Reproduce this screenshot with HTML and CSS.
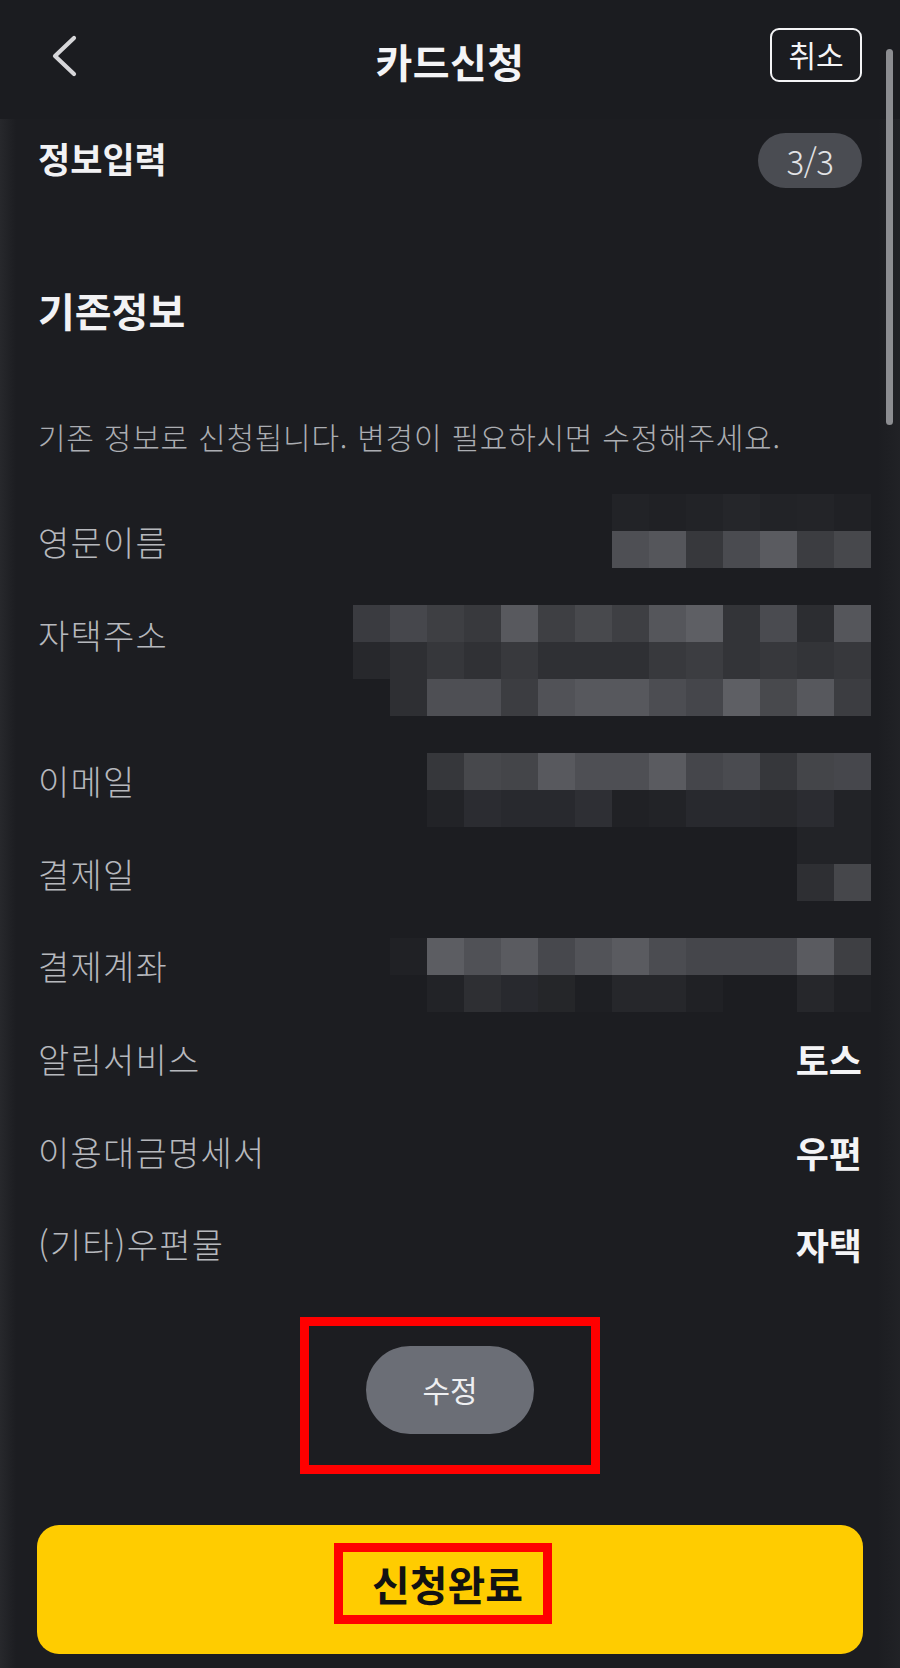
FILE: index.html
```html
<!DOCTYPE html>
<html lang="ko">
<head>
<meta charset="utf-8">
<title>카드신청</title>
<link rel="stylesheet" href="styles.css">
</head>
<body>
<div class="app">
  <header class="topbar">
    <button class="back" aria-label="뒤로">
      <svg width="30" height="44" viewBox="0 0 30 44"><path d="M22 4 L3 22 L22 40" fill="none" stroke="#d6d6d9" stroke-width="4.2" stroke-linecap="round" stroke-linejoin="round"/></svg>
    </button>
    <h1 class="title">카드신청</h1>
    <button class="cancel">취소</button>
  </header>

  <main class="content">
    <div class="step">
      <div class="step-title">정보입력</div>
      <div class="step-pill">3/3</div>
    </div>

    <h2 class="section-title">기존정보</h2>
    <p class="desc">기존 정보로 신청됩니다. 변경이 필요하시면 수정해주세요.</p>

    <div class="data">
      <div class="row r-name">
        <div class="label">영문이름</div>
        <div class="mosaic">
          <div class="mrow"><i style="background:#222327"></i><i style="background:#202125"></i><i style="background:#222327"></i><i style="background:#25262a"></i><i style="background:#222327"></i><i style="background:#232428"></i><i style="background:#202125"></i></div>
          <div class="mrow"><i style="background:#4e4f54"></i><i style="background:#55565b"></i><i style="background:#37383c"></i><i style="background:#4a4b50"></i><i style="background:#5a5b60"></i><i style="background:#3c3d41"></i><i style="background:#47484c"></i></div>
        </div>
      </div>

      <div class="row r-addr">
        <div class="label">자택주소</div>
        <div class="mosaic">
          <div class="mrow"><i style="background:#3a3b40"></i><i style="background:#46474c"></i><i style="background:#3e3f43"></i><i style="background:#38393d"></i><i style="background:#58595e"></i><i style="background:#3e3f43"></i><i style="background:#48494d"></i><i style="background:#3e3f43"></i><i style="background:#55565b"></i><i style="background:#5e5f64"></i><i style="background:#333438"></i><i style="background:#4a4b50"></i><i style="background:#2c2d31"></i><i style="background:#55565b"></i></div>
          <div class="mrow"><i style="background:#27282c"></i><i style="background:#2e2f33"></i><i style="background:#36373b"></i><i style="background:#303135"></i><i style="background:#38393d"></i><i style="background:#2f3034"></i><i style="background:#2f3034"></i><i style="background:#2f3034"></i><i style="background:#38393d"></i><i style="background:#3c3d41"></i><i style="background:#333438"></i><i style="background:#37383c"></i><i style="background:#333438"></i><i style="background:#37383c"></i></div>
          <div class="mrow"><i style="background:#2e2f33"></i><i style="background:#4e4f54"></i><i style="background:#4e4f54"></i><i style="background:#3c3d41"></i><i style="background:#515257"></i><i style="background:#57585d"></i><i style="background:#57585d"></i><i style="background:#4c4d52"></i><i style="background:#45464b"></i><i style="background:#5e5f64"></i><i style="background:#48494d"></i><i style="background:#57585d"></i><i style="background:#3c3d41"></i></div>
        </div>
      </div>

      <div class="row r-mail">
        <div class="label">이메일</div>
        <div class="mosaic">
          <div class="mrow"><i style="background:#36373b"></i><i style="background:#47484c"></i><i style="background:#444549"></i><i style="background:#58595e"></i><i style="background:#4e4f54"></i><i style="background:#4e4f54"></i><i style="background:#5a5b60"></i><i style="background:#45464b"></i><i style="background:#4a4b50"></i><i style="background:#36373b"></i><i style="background:#444549"></i><i style="background:#46474c"></i></div>
          <div class="mrow"><i style="background:#222327"></i><i style="background:#2b2c31"></i><i style="background:#28292e"></i><i style="background:#28292e"></i><i style="background:#2e2f34"></i><i style="background:#202125"></i><i style="background:#222327"></i><i style="background:#28292e"></i><i style="background:#28292e"></i><i style="background:#27282c"></i><i style="background:#2b2c31"></i><i style="background:#222327"></i></div>
        </div>
      </div>

      <div class="row r-day">
        <div class="label">결제일</div>
        <div class="mosaic">
          <div class="mrow"><i style="background:#222327"></i><i style="background:#222327"></i></div>
          <div class="mrow"><i style="background:#2e2f33"></i><i style="background:#46474b"></i></div>
        </div>
      </div>

      <div class="row r-acct">
        <div class="label">결제계좌</div>
        <div class="mosaic">
          <div class="mrow"><i style="background:#202125"></i><i style="background:#5c5d62"></i><i style="background:#505156"></i><i style="background:#5a5b60"></i><i style="background:#47484d"></i><i style="background:#525358"></i><i style="background:#5a5b60"></i><i style="background:#4b4c51"></i><i style="background:#45464b"></i><i style="background:#45464b"></i><i style="background:#45464b"></i><i style="background:#5a5b60"></i><i style="background:#3e3f43"></i></div>
          <div class="mrow"><i style="background:#1c1d21"></i><i style="background:#222327"></i><i style="background:#2e2f33"></i><i style="background:#28292e"></i><i style="background:#252629"></i><i style="background:#1e1f23"></i><i style="background:#26272b"></i><i style="background:#26272b"></i><i style="background:#202125"></i><i style="background:#1c1d21"></i><i style="background:#1c1d21"></i><i style="background:#26272b"></i><i style="background:#1f2024"></i></div>
        </div>
      </div>

      <div class="row text first">
        <div class="label">알림서비스</div>
        <div class="value">토스</div>
      </div>
      <div class="row text">
        <div class="label">이용대금명세서</div>
        <div class="value">우편</div>
      </div>
      <div class="row text">
        <div class="label">(기타)우편물</div>
        <div class="value">자택</div>
      </div>
    </div>

    <div class="edit-mark">
      <button class="edit-btn">수정</button>
    </div>

    <button class="submit">
      <span class="submit-mark">신청완료</span>
    </button>
  </main>

  <div class="scrollbar"></div>
</div>
</body>
</html>
```

FILE: styles.css
```css
* { box-sizing: border-box; }

html, body {
  margin: 0;
  padding: 0;
  background: #1c1d21;
}

body {
  font-family: "Noto Sans CJK KR", "Noto Sans", sans-serif;
  color: #f2f2f4;
}

.app {
  position: relative;
  width: 900px;
  height: 1668px;
  overflow: hidden;
  background: #1c1d21;
}

button {
  font-family: inherit;
  background: none;
  border: 0;
  padding: 0;
  cursor: pointer;
}

/* Header */
.topbar {
  height: 119px;
  display: flex;
  align-items: center;
  justify-content: space-between;
  padding: 0 38px 0 52px;
  background: #1b1c20;
  position: relative;
}

.back {
  width: 30px;
  height: 44px;
  margin-top: -8px;
  display: flex;
}

.title {
  position: absolute;
  left: 0;
  right: 0;
  top: 36px;
  margin: 0;
  text-align: center;
  font-size: 40px;
  line-height: 50px;
  font-weight: 700;
  letter-spacing: 0.5px;
  color: #f4f4f6;
  pointer-events: none;
}

.cancel {
  width: 92px;
  height: 54px;
  margin-top: -9px;
  border: 2px solid #f4f4f6;
  border-radius: 9px;
  color: #f4f4f6;
  font-size: 30px;
  font-weight: 400;
  line-height: 1;
  display: flex;
  align-items: center;
  justify-content: center;
  padding-bottom: 3px;
}

/* Content */
.content {
  padding: 0 38px;
  background: linear-gradient(to right, #27282c 0, #1c1d21 16px, #1c1d21 calc(100% - 22px), #212226 100%);
  height: 1549px;
}

.step {
  padding-top: 14px;
  display: flex;
  justify-content: space-between;
  align-items: center;
}

.step-title {
  font-size: 35px;
  line-height: 40px;
  font-weight: 700;
  margin-top: -5px;
  color: #f2f2f4;
}

.step-pill {
  width: 104px;
  height: 55px;
  border-radius: 28px;
  background: #4a4c52;
  color: #e2e3e6;
  font-size: 33px;
  font-weight: 300;
  display: flex;
  align-items: center;
  justify-content: center;
  letter-spacing: -0.5px;
}

.section-title {
  margin: 98px 0 0;
  font-size: 40px;
  line-height: 48px;
  font-weight: 700;
  color: #f2f2f4;
}

.desc {
  margin: 82px 0 0;
  font-size: 30px;
  line-height: 40px;
  font-weight: 300;
  letter-spacing: 0.75px;
  color: #abadb2;
  white-space: nowrap;
}

/* Data rows */
.data {
  margin-top: 38px;
}

.row {
  display: flex;
  justify-content: space-between;
  align-items: flex-start;
}

.label {
  font-size: 34px;
  line-height: 40px;
  font-weight: 300;
  letter-spacing: 1.2px;
  color: #b6b8bd;
  white-space: nowrap;
}

.mosaic {
  margin-right: -9px;
  display: flex;
  flex-direction: column;
}

.mrow {
  display: flex;
  justify-content: flex-end;
}

.mrow i {
  display: block;
  width: 37px;
  height: 37px;
}

.r-name .label { margin-top: 28px; }
.r-addr { margin-top: 37px; }
.r-addr .label { margin-top: 10px; }
.r-mail { margin-top: 37px; }
.r-mail .label { margin-top: 8px; }
.r-day .label { margin-top: 27px; }
.r-acct { margin-top: 37px; }
.r-acct .label { margin-top: 8px; }

.row.text {
  height: 40px;
  align-items: center;
  margin-top: 52.5px;
}

.row.text.first {
  margin-top: 27px;
}

.value {
  font-size: 36px;
  line-height: 40px;
  font-weight: 700;
  color: #f4f4f6;
}

/* Edit button with annotation frame */
.edit-mark {
  width: 300px;
  margin: 53px 0 0 262px;
  border: 9px solid #ff0000;
  padding: 20px 0 31px;
  display: flex;
  justify-content: center;
}

.edit-btn {
  width: 168px;
  height: 88px;
  border-radius: 44px;
  background: #6b6e76;
  color: #eeeff1;
  font-size: 30px;
  font-weight: 400;
  display: flex;
  align-items: center;
  justify-content: center;
  padding-bottom: 2px;
}

/* Submit */
.submit {
  display: flex;
  align-items: flex-start;
  justify-content: center;
  width: 826px;
  height: 129px;
  margin: 51px 0 0 -1px;
  background: #ffcc00;
  border-radius: 22px;
  padding-top: 18px;
}

.submit-mark {
  width: 218px;
  height: 81px;
  border: 9px solid #ff0000;
  display: flex;
  align-items: center;
  justify-content: center;
  font-size: 41px;
  font-weight: 700;
  color: #121212;
  padding: 0 0 1px 10px;
  margin-left: -15px;
  white-space: nowrap;
}

/* Scrollbar overlay */
.scrollbar {
  position: absolute;
  top: 49px;
  left: 886px;
  width: 7px;
  height: 376px;
  border-radius: 4px;
  background: #8c8d91;
}
```
